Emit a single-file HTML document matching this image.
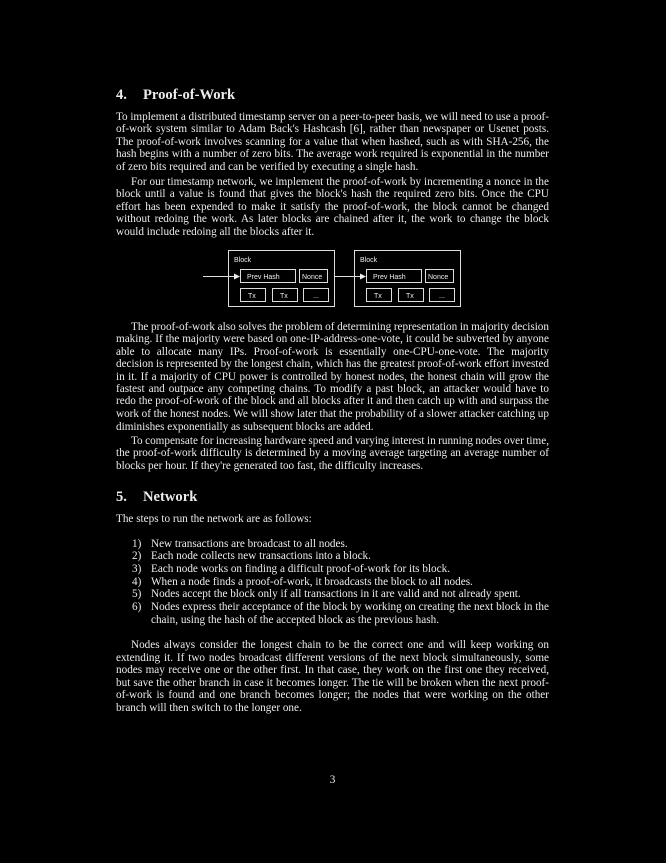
<!DOCTYPE html>
<html><head><meta charset="utf-8"><style>
body{margin:0;background:#000;width:666px;height:863px;position:relative;overflow:hidden;font-family:"Liberation Serif",serif;color:#ececec}
.l{position:absolute;left:116px;width:433px;font-size:11.2px;line-height:12px;white-space:nowrap}
.j{text-align:justify;text-align-last:justify;white-space:normal;word-spacing:-2px;height:12px;overflow:visible}
h2{position:absolute;margin:0;font-size:14.6px;font-weight:bold;left:116px}
h2 span{display:inline-block;width:27px}
.n{position:absolute;left:132px;font-size:11.2px;line-height:12px}
.t{position:absolute;left:151px;font-size:11.2px;line-height:12px;white-space:nowrap}
</style></head><body>
<h2 style="top:87px"><span>4.</span>Proof-of-Work</h2>
<div class="l j" style="top:111px">To implement a distributed timestamp server on a peer-to-peer basis, we will need to use a proof-</div>
<div class="l j" style="top:123px">of-work system similar to Adam Back's Hashcash [6], rather than newspaper or Usenet posts.</div>
<div class="l j" style="top:136px">The proof-of-work involves scanning for a value that when hashed, such as with SHA-256, the</div>
<div class="l j" style="top:148px">hash begins with a number of zero bits. The average work required is exponential in the number</div>
<div class="l" style="top:161px">of zero bits required and can be verified by executing a single hash.</div>
<div class="l j" style="top:176px;left:131px;width:418px">For our timestamp network, we implement the proof-of-work by incrementing a nonce in the</div>
<div class="l j" style="top:188px">block until a value is found that gives the block's hash the required zero bits. Once the CPU</div>
<div class="l j" style="top:201px">effort has been expended to make it satisfy the proof-of-work, the block cannot be changed</div>
<div class="l j" style="top:213px">without redoing the work. As later blocks are chained after it, the work to change the block</div>
<div class="l" style="top:226px">would include redoing all the blocks after it.</div>
<svg style="position:absolute;left:0;top:0" width="666" height="863" font-family="Liberation Sans,sans-serif" font-size="7" fill="#eee">
<g stroke="#ddd" stroke-width="1" fill="none">
<rect x="228.5" y="250.5" width="106" height="56"/>
<rect x="354.5" y="250.5" width="106" height="56"/>
<rect x="240.5" y="269.5" width="55" height="13"/><rect x="299.5" y="269.5" width="28" height="13"/>
<rect x="240.5" y="288.5" width="25" height="13"/><rect x="272.5" y="288.5" width="25" height="13"/><rect x="303.5" y="288.5" width="25" height="13"/>
<rect x="366.5" y="269.5" width="55" height="13"/><rect x="425.5" y="269.5" width="28" height="13"/>
<rect x="366.5" y="288.5" width="25" height="13"/><rect x="398.5" y="288.5" width="25" height="13"/><rect x="429.5" y="288.5" width="25" height="13"/>
<line x1="203" y1="276.5" x2="236" y2="276.5"/><line x1="335" y1="276.5" x2="362" y2="276.5"/>
</g>
<path d="M234 273.5 L240 276.5 L234 279.5Z M360 273.5 L366 276.5 L360 279.5Z" fill="#eee"/>
<text x="234" y="262">Block</text><text x="360" y="262">Block</text>
<text x="247" y="279">Prev Hash</text><text x="302" y="279">Nonce</text>
<text x="373" y="279">Prev Hash</text><text x="428" y="279">Nonce</text>
<text x="248" y="298">Tx</text><text x="280" y="298">Tx</text><text x="313" y="298">...</text>
<text x="374" y="298">Tx</text><text x="406" y="298">Tx</text><text x="439" y="298">...</text>
</svg>
<div class="l j" style="top:321px;left:131px;width:418px">The proof-of-work also solves the problem of determining representation in majority decision</div>
<div class="l j" style="top:333px">making. If the majority were based on one-IP-address-one-vote, it could be subverted by anyone</div>
<div class="l j" style="top:346px">able to allocate many IPs. Proof-of-work is essentially one-CPU-one-vote. The majority</div>
<div class="l j" style="top:358px">decision is represented by the longest chain, which has the greatest proof-of-work effort invested</div>
<div class="l j" style="top:371px">in it. If a majority of CPU power is controlled by honest nodes, the honest chain will grow the</div>
<div class="l j" style="top:383px">fastest and outpace any competing chains. To modify a past block, an attacker would have to</div>
<div class="l j" style="top:395px">redo the proof-of-work of the block and all blocks after it and then catch up with and surpass the</div>
<div class="l j" style="top:408px">work of the honest nodes. We will show later that the probability of a slower attacker catching up</div>
<div class="l" style="top:421px">diminishes exponentially as subsequent blocks are added.</div>
<div class="l j" style="top:435px;left:131px;width:418px">To compensate for increasing hardware speed and varying interest in running nodes over time,</div>
<div class="l j" style="top:447px">the proof-of-work difficulty is determined by a moving average targeting an average number of</div>
<div class="l" style="top:460px">blocks per hour. If they're generated too fast, the difficulty increases.</div>
<h2 style="top:489px"><span>5.</span>Network</h2>
<div class="l" style="top:513px">The steps to run the network are as follows:</div>
<div class="n" style="top:538px">1)</div><div class="t" style="top:538px">New transactions are broadcast to all nodes.</div>
<div class="n" style="top:550px">2)</div><div class="t" style="top:550px">Each node collects new transactions into a block.</div>
<div class="n" style="top:563px">3)</div><div class="t" style="top:563px">Each node works on finding a difficult proof-of-work for its block.</div>
<div class="n" style="top:576px">4)</div><div class="t" style="top:576px">When a node finds a proof-of-work, it broadcasts the block to all nodes.</div>
<div class="n" style="top:588px">5)</div><div class="t" style="top:588px">Nodes accept the block only if all transactions in it are valid and not already spent.</div>
<div class="n" style="top:601px">6)</div><div class="t j" style="top:601px;width:398px">Nodes express their acceptance of the block by working on creating the next block in the</div>
<div class="t" style="top:614px">chain, using the hash of the accepted block as the previous hash.</div>
<div class="l j" style="top:639px;left:131px;width:418px">Nodes always consider the longest chain to be the correct one and will keep working on</div>
<div class="l j" style="top:652px">extending it. If two nodes broadcast different versions of the next block simultaneously, some</div>
<div class="l j" style="top:664px">nodes may receive one or the other first. In that case, they work on the first one they received,</div>
<div class="l j" style="top:677px">but save the other branch in case it becomes longer. The tie will be broken when the next proof-</div>
<div class="l j" style="top:689px">of-work is found and one branch becomes longer; the nodes that were working on the other</div>
<div class="l" style="top:702px">branch will then switch to the longer one.</div>
<div class="l" style="top:774px;text-align:center">3</div>
</body></html>
